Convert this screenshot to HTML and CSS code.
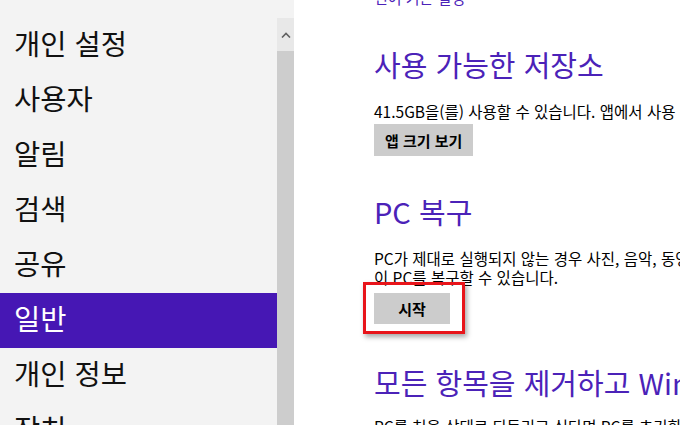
FILE: index.html
```html
<!DOCTYPE html>
<html lang="ko">
<head>
  <meta charset="UTF-8" />
  <title>PC 설정 - 일반</title>
  <link rel="stylesheet" href="styles.css">
</head>
<body>
  <div class="sidebar">
    <ul class="nav">
      <li>개인 설정</li>
      <li>사용자</li>
      <li>알림</li>
      <li>검색</li>
      <li>공유</li>
      <li class="active">일반</li>
      <li>개인 정보</li>
      <li>장치</li>
    </ul>
  </div>
  <div class="scrollbar">
    <div class="track">
      <div class="arrow">
        <svg width="10" height="6" viewBox="0 0 10 6"><polyline points="1,5.5 5,1.5 9,5.5" fill="none" stroke="#606060" stroke-width="1.6"/></svg>
      </div>
      <div class="thumb"></div>
    </div>
  </div>
  <div class="content">
    <a class="link" href="#">언어 기본 설정</a>

    <h2>사용 가능한 저장소</h2>
    <p class="desc">41.5GB을(를) 사용할 수 있습니다. 앱에서 사용 중인 공간을 확인하세요.</p>
    <button class="btn">앱 크기 보기</button>

    <h2>PC 복구</h2>
    <p class="desc">PC가 제대로 실행되지 않는 경우 사진, 음악, 동영상 및 기타 개인 파일을 삭제하지 않고<br>이 PC를 복구할 수 있습니다.</p>
    <span class="marked">
      <button class="btn wide">시작</button>
      <span class="callout"></span>
    </span>

    <h2>모든 항목을 제거하고 Windows 다시 설치</h2>
    <p class="desc last">PC를 처음 상태로 되돌리고 싶다면 PC를 초기화하여 처음부터 다시 시작할 수 있습니다.</p>
  </div>
</body>
</html>
```

FILE: styles.css
```css
body {
  margin: 0;
  height: 425px;
  overflow: hidden;
  display: flex;
  font-family: "Noto Sans CJK KR", "Noto Sans", sans-serif;
  background: #fff;
  color: #000;
}
.sidebar {
  width: 277px;
  flex-shrink: 0;
  background: #f3f3f3;
  padding-top: 18px;
}
.nav {
  list-style: none;
  margin: 0;
  padding: 0;
}
.nav li {
  height: 55px;
  line-height: 49px;
  padding-left: 14px;
  font-size: 28.5px;
  color: #111;
  white-space: nowrap;
}
.nav li.active {
  background: #4617b4;
  color: #fff;
}
.scrollbar {
  width: 17px;
  flex-shrink: 0;
  background: #f3f3f3;
  padding-top: 18px;
  display: flex;
}
.track {
  flex: 1;
  display: flex;
  flex-direction: column;
}
.arrow {
  height: 33px;
  background: #e8e8e8;
  display: flex;
  align-items: center;
  justify-content: center;
}
.thumb {
  flex: 1;
  background: #cdcdcd;
}
.content {
  flex: 1;
  padding-left: 80px;
  margin-top: -12px;
  white-space: nowrap;
  overflow: hidden;
}
.link {
  display: block;
  font-size: 15px;
  line-height: 20px;
  color: #4b22b8;
  text-decoration: none;
}
h2 {
  margin: 38px 0 0;
  font-size: 29px;
  line-height: 36px;
  font-weight: 400;
  color: #4b22b8;
}
.desc {
  margin: 20px 0 3px;
  font-size: 15.5px;
  line-height: 19px;
}
.desc.last {
  margin-top: 17px;
}
.btn {
  display: block;
  height: 32px;
  padding: 0 11px;
  border: none;
  background: #cccccc;
  font-family: inherit;
  font-size: 15px;
  font-weight: 700;
  color: #000;
}
.btn.wide {
  width: 76px;
  height: 31px;
}
.btn + h2 {
  margin-top: 37px;
}
.marked + h2 {
  margin-top: 40px;
}
.marked {
  position: relative;
  display: inline-block;
  margin-top: 3px;
}
.callout {
  position: absolute;
  top: -11px;
  left: -11px;
  right: -15px;
  bottom: -10px;
  border: 3px solid #e8141a;
  box-shadow: 2px 3px 5px rgba(0, 0, 0, 0.35);
}
```
